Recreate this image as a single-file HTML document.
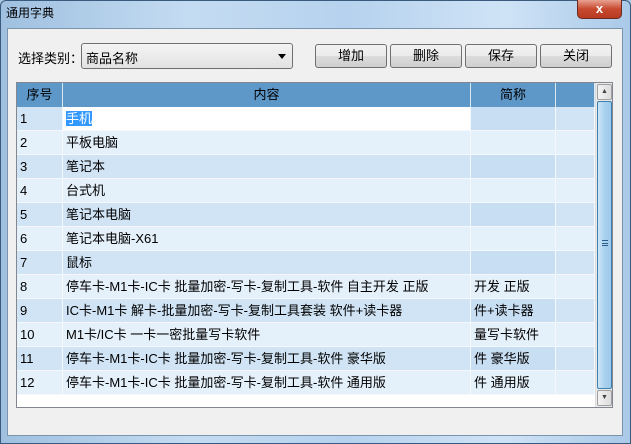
<!DOCTYPE html>
<html><head><meta charset="utf-8"><style>
*{margin:0;padding:0;box-sizing:border-box}
body{width:631px;height:444px;overflow:hidden;font-family:"Liberation Sans","Noto Sans CJK SC",sans-serif;font-size:13px;color:#000;position:relative;background:#a9c8e6}
.frame{position:absolute;left:0;top:0;width:631px;height:444px;background:linear-gradient(90deg,#9fc0e0 0%,#c4dcf2 30%,#b6d2ee 55%,#cfe3f6 80%,#aac9e8 100%);border:1px solid #3b5b7e;border-radius:6px 6px 0 0}
.title{position:absolute;left:6px;top:4px;font-size:12px;color:#000}
.close{position:absolute;left:577px;top:0;width:45px;height:19px;background:linear-gradient(#e8a291,#c7492f 50%,#b83a22);border:1px solid #6b2a1e;border-top:none;border-radius:0 0 5px 5px;color:#fff;font-weight:bold;text-align:center;font-size:13px;line-height:17px}
.client{position:absolute;left:7px;top:28px;width:616px;height:408px;background:#f0f0f0;border:1px solid #7c93ac}
.abs{position:absolute}
.lbl{left:18px;top:48px}
.combo{left:81px;top:43px;width:212px;height:26px;border:1px solid #707070;border-radius:3px;background:linear-gradient(#f4f4f4,#e2e2e2);padding:4px 4px;}
.arrow{position:absolute;right:6px;top:10px;width:0;height:0;border-left:4px solid transparent;border-right:4px solid transparent;border-top:5px solid #000}
.btn{top:44px;width:72px;height:24px;border:1px solid #707070;border-radius:3px;background:linear-gradient(#f2f2f2 0%,#ebebeb 50%,#dcdcdc 51%,#cfcfcf 100%);text-align:center;line-height:22px}
.grid{left:16px;top:82px;width:597px;height:326px;border:1px solid #828790;background:#fff;overflow:hidden}
.hdr{position:absolute;left:0;top:0;height:24px;background:#5e98c9;color:#000;text-align:center;line-height:24px;border-right:1px solid #d8e8f5}
.row{position:absolute;left:0;height:24px;width:578px}
.c{position:absolute;top:0;height:24px;line-height:24px;padding-left:3px;border-right:1px solid #f4f8fc;border-bottom:1px solid #f4f8fc;white-space:nowrap;overflow:hidden}
.sb{position:absolute;left:578px;top:0;width:17px;height:324px;background:#eaeaea;border-left:1px solid #ddd}
.thumb{position:absolute;left:1px;top:18px;width:15px;height:288px;border:1px solid #3c7fb1;border-radius:2px;background:linear-gradient(90deg,#cde6f7,#a9d2ee 50%,#9dc9ea)}
.sbtn{position:absolute;left:1px;width:15px;height:16px;border:1px solid #a0a0a0;border-radius:2px;background:linear-gradient(90deg,#f3f3f3,#dcdcdc);font-size:7px;text-align:center;line-height:14px;color:#444}
</style></head><body>
<div class="frame"></div>
<div class="title">通用字典</div>
<div class="close">x</div>
<div class="client"></div>
<div class="abs lbl">选择类别：</div>
<div class="abs combo">商品名称<div class="arrow"></div></div>
<div class="abs btn" style="left:315px">增加</div>
<div class="abs btn" style="left:390px">删除</div>
<div class="abs btn" style="left:465px">保存</div>
<div class="abs btn" style="left:540px">关闭</div>
<div class="abs grid">
<div class="hdr" style="left:0;width:46px">序号</div>
<div class="hdr" style="left:46px;width:408px">内容</div>
<div class="hdr" style="left:454px;width:85px">简称</div>
<div class="hdr" style="left:539px;width:39px"></div>
<div id="rows"></div>
<div class="sb"><div class="sbtn" style="top:1px">▲</div><div class="thumb"><div style="position:absolute;left:4px;top:138px;width:6px;height:6px;border-top:1px solid #2b5f8a;border-bottom:1px solid #2b5f8a"><div style="margin-top:2px;border-top:1px solid #2b5f8a"></div></div></div><div class="sbtn" style="top:307px">▼</div></div>
</div>
<script>
var d=[["1","手机",""],["2","平板电脑",""],["3","笔记本",""],["4","台式机",""],["5","笔记本电脑",""],["6","笔记本电脑-X61",""],["7","鼠标",""],["8","停车卡-M1卡-IC卡 批量加密-写卡-复制工具-软件 自主开发 正版","开发 正版"],["9","IC卡-M1卡 解卡-批量加密-写卡-复制工具套装 软件+读卡器","件+读卡器"],["10","M1卡/IC卡 一卡一密批量写卡软件","量写卡软件"],["11","停车卡-M1卡-IC卡 批量加密-写卡-复制工具-软件 豪华版","件 豪华版"],["12","停车卡-M1卡-IC卡 批量加密-写卡-复制工具-软件 通用版","件 通用版"]];
var h="";
d.forEach(function(r,i){var bg=i%2==0?"#d0e4f5":"#e4f0fa";var t=24+i*24;
var cbg=i==0?"#fff":bg;var txt=i==0?'<span style="background:#3399ff;color:#fff">手机</span>':r[1];
h+='<div class="row" style="top:'+t+'px"><div class="c" style="left:0;width:46px;background:'+bg+'">'+r[0]+'</div><div class="c" style="left:46px;width:408px;background:'+cbg+'">'+txt+'</div><div class="c" style="left:454px;width:85px;background:'+(i%2==0?'#c8def2':bg)+'">'+r[2]+'</div><div class="c" style="left:539px;width:39px;background:'+bg+'"></div></div>';});
document.getElementById("rows").innerHTML=h;
</script>
</body></html>
